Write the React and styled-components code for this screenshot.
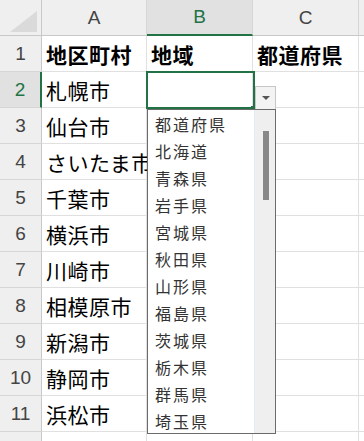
import React from 'react'
import styled, { createGlobalStyle, css } from 'styled-components'

const GlobalStyle = createGlobalStyle`
  html, body { margin: 0; padding: 0; background: #fff; }
  body { font-family: "Noto Sans CJK JP", sans-serif; }
`

const GREEN = '#217346'

const Sheet = styled.div`
  position: relative;
  width: 364px;
  height: 441px;
  overflow: hidden;
  background: #fff;
`

const Grid = styled.div`
  display: grid;
  grid-template-columns: 42px 105px 106px 106px 60px;
  grid-auto-rows: 36px;
`

const Corner = styled.div`
  position: relative;
  box-sizing: border-box;
  background: #efefef;
  border-right: 1px solid #c9c9c9;
  border-bottom: 1px solid #c9c9c9;
  &::after {
    content: '';
    position: absolute;
    right: 4px;
    bottom: 3px;
    width: 0;
    height: 0;
    border-left: 27px solid transparent;
    border-bottom: 21px solid #dadada;
  }
`

const ColHead = styled.div`
  box-sizing: border-box;
  display: flex;
  align-items: center;
  justify-content: center;
  background: #efefef;
  border-right: 1px solid #d6d6d6;
  border-bottom: 1px solid #c9c9c9;
  font-family: "Liberation Sans", Arial, sans-serif;
  font-size: 19px;
  color: #444;
  ${(p) =>
    p.active &&
    css`
      background: #e1e1e1;
      color: ${GREEN};
      border-bottom: 2px solid ${GREEN};
    `}
`

const RowHead = styled.div`
  box-sizing: border-box;
  display: flex;
  align-items: center;
  justify-content: center;
  background: #efefef;
  border-right: 1px solid #c9c9c9;
  border-bottom: 1px solid #d6d6d6;
  font-family: "Liberation Sans", Arial, sans-serif;
  font-size: 19px;
  color: #444;
  ${(p) =>
    p.active &&
    css`
      background: #e1e1e1;
      color: ${GREEN};
      border-right: 2px solid ${GREEN};
    `}
`

const Cell = styled.div`
  box-sizing: border-box;
  display: flex;
  align-items: center;
  padding-left: 4px;
  border-right: 1px solid #e0e0e0;
  border-bottom: 1px solid #e0e0e0;
  font-family: "Noto Sans CJK JP", sans-serif;
  font-size: 21px;
  letter-spacing: 0.5px;
  white-space: nowrap;
  color: #000;
  font-weight: ${(p) => (p.bold ? 700 : 400)};
`

const Selection = styled.div`
  position: absolute;
  left: 146px;
  top: 71px;
  width: 109px;
  height: 38px;
  box-sizing: border-box;
  border: 2px solid ${GREEN};
`

const FillHandle = styled.div`
  position: absolute;
  left: 251px;
  top: 106px;
  width: 5px;
  height: 5px;
  background: ${GREEN};
`

const DropButton = styled.div`
  position: absolute;
  left: 255px;
  top: 86px;
  width: 21px;
  height: 24px;
  box-sizing: border-box;
  background: #f3f3f3;
  border: 1px solid #c6c6c6;
  display: flex;
  align-items: center;
  justify-content: center;
  &::after {
    content: '';
    border-left: 4px solid transparent;
    border-right: 4px solid transparent;
    border-top: 4px solid #555;
  }
`

const DropList = styled.div`
  position: absolute;
  left: 147px;
  top: 109px;
  width: 129px;
  height: 325px;
  box-sizing: border-box;
  border: 1px solid #6b6b6b;
  background: #fff;
  display: flex;
`

const Items = styled.ul`
  flex: 1;
  margin: 0;
  padding: 1px 0 0 7px;
  list-style: none;
  overflow: hidden;
`

const Item = styled.li`
  height: 27px;
  line-height: 27px;
  font-family: "Noto Sans CJK JP", sans-serif;
  font-size: 16px;
  letter-spacing: 2px;
  color: #333;
  white-space: nowrap;
`

const ScrollTrack = styled.div`
  width: 21px;
  background: #efefef;
  border-left: 1px solid #e6ecf3;
  display: flex;
  justify-content: center;
  padding-top: 21px;
  box-sizing: border-box;
`

const ScrollThumb = styled.div`
  width: 6px;
  height: 69px;
  background: #888;
  margin-left: 2px;
`

const cols = ['A', 'B', 'C', '']
const rows = [
  ['地区町村', '地域', '都道府県'],
  ['札幌市', '', ''],
  ['仙台市', '', ''],
  ['さいたま市', '', ''],
  ['千葉市', '', ''],
  ['横浜市', '', ''],
  ['川崎市', '', ''],
  ['相模原市', '', ''],
  ['新潟市', '', ''],
  ['静岡市', '', ''],
  ['浜松市', '', ''],
  ['名古屋市', '', ''],
]
const prefs = [
  '都道府県', '北海道', '青森県', '岩手県', '宮城県', '秋田県',
  '山形県', '福島県', '茨城県', '栃木県', '群馬県', '埼玉県',
]

export default function App() {
  return (
    <Sheet>
      <GlobalStyle />
      <Grid>
        <Corner />
        {cols.map((c, i) => (
          <ColHead key={i} active={c === 'B'}>{c}</ColHead>
        ))}
        {rows.map((r, i) => (
          <React.Fragment key={i}>
            <RowHead active={i === 1}>{i + 1}</RowHead>
            {r.map((v, j) => (
              <Cell key={j} bold={i === 0}>{v}</Cell>
            ))}
            <Cell />
          </React.Fragment>
        ))}
      </Grid>
      <Selection />
      <FillHandle />
      <DropButton />
      <DropList>
        <Items>
          {prefs.map((p) => (
            <Item key={p}>{p}</Item>
          ))}
        </Items>
        <ScrollTrack>
          <ScrollThumb />
        </ScrollTrack>
      </DropList>
    </Sheet>
  )
}
